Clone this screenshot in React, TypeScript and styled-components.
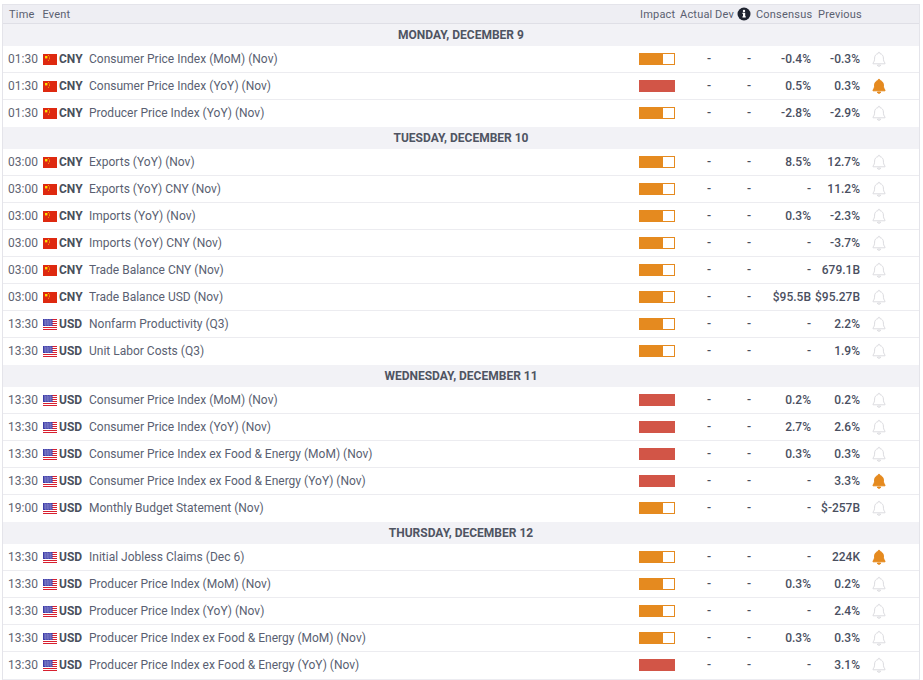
import styled, { createGlobalStyle } from "styled-components";

type Ev = {
  time: string;
  cur: "CNY" | "USD";
  name: string;
  high?: boolean;
  cons: string;
  prev: string;
  alert?: boolean;
};

const days: { title: string; rows: Ev[] }[] = [
  {
    title: "MONDAY, DECEMBER 9",
    rows: [
      { time: "01:30", cur: "CNY", name: "Consumer Price Index (MoM) (Nov)", cons: "-0.4%", prev: "-0.3%" },
      { time: "01:30", cur: "CNY", name: "Consumer Price Index (YoY) (Nov)", high: true, cons: "0.5%", prev: "0.3%", alert: true },
      { time: "01:30", cur: "CNY", name: "Producer Price Index (YoY) (Nov)", cons: "-2.8%", prev: "-2.9%" },
    ],
  },
  {
    title: "TUESDAY, DECEMBER 10",
    rows: [
      { time: "03:00", cur: "CNY", name: "Exports (YoY) (Nov)", cons: "8.5%", prev: "12.7%" },
      { time: "03:00", cur: "CNY", name: "Exports (YoY) CNY (Nov)", cons: "-", prev: "11.2%" },
      { time: "03:00", cur: "CNY", name: "Imports (YoY) (Nov)", cons: "0.3%", prev: "-2.3%" },
      { time: "03:00", cur: "CNY", name: "Imports (YoY) CNY (Nov)", cons: "-", prev: "-3.7%" },
      { time: "03:00", cur: "CNY", name: "Trade Balance CNY (Nov)", cons: "-", prev: "679.1B" },
      { time: "03:00", cur: "CNY", name: "Trade Balance USD (Nov)", cons: "$95.5B", prev: "$95.27B" },
      { time: "13:30", cur: "USD", name: "Nonfarm Productivity (Q3)", cons: "-", prev: "2.2%" },
      { time: "13:30", cur: "USD", name: "Unit Labor Costs (Q3)", cons: "-", prev: "1.9%" },
    ],
  },
  {
    title: "WEDNESDAY, DECEMBER 11",
    rows: [
      { time: "13:30", cur: "USD", name: "Consumer Price Index (MoM) (Nov)", high: true, cons: "0.2%", prev: "0.2%" },
      { time: "13:30", cur: "USD", name: "Consumer Price Index (YoY) (Nov)", high: true, cons: "2.7%", prev: "2.6%" },
      { time: "13:30", cur: "USD", name: "Consumer Price Index ex Food & Energy (MoM) (Nov)", high: true, cons: "0.3%", prev: "0.3%" },
      { time: "13:30", cur: "USD", name: "Consumer Price Index ex Food & Energy (YoY) (Nov)", high: true, cons: "-", prev: "3.3%", alert: true },
      { time: "19:00", cur: "USD", name: "Monthly Budget Statement (Nov)", cons: "-", prev: "$-257B" },
    ],
  },
  {
    title: "THURSDAY, DECEMBER 12",
    rows: [
      { time: "13:30", cur: "USD", name: "Initial Jobless Claims (Dec 6)", cons: "-", prev: "224K", alert: true },
      { time: "13:30", cur: "USD", name: "Producer Price Index (MoM) (Nov)", cons: "0.3%", prev: "0.2%" },
      { time: "13:30", cur: "USD", name: "Producer Price Index (YoY) (Nov)", cons: "-", prev: "2.4%" },
      { time: "13:30", cur: "USD", name: "Producer Price Index ex Food & Energy (MoM) (Nov)", cons: "0.3%", prev: "0.3%" },
      { time: "13:30", cur: "USD", name: "Producer Price Index ex Food & Energy (YoY) (Nov)", high: true, cons: "-", prev: "3.1%" },
    ],
  },
];

function Flag({ cur }: { cur: Ev["cur"] }) {
  if (cur === "CNY") {
    return (
      <FlagSvg viewBox="0 0 14 11">
        <rect width="14" height="11" fill="#de2910" />
        <rect x="2" y="2" width="2.400" height="2.400" fill="#ffde00" />
        <rect x="5" y="1" width="1" height="1" fill="#f5b000" />
        <rect x="6" y="2.600" width="1" height="1" fill="#f5b000" />
        <rect x="6" y="4.200" width="1" height="1" fill="#f5b000" />
        <rect x="5" y="5.800" width="1" height="1" fill="#f5b000" />
      </FlagSvg>
    );
  }
  return (
    <FlagSvg viewBox="0 0 14 11">
      <rect width="14" height="11" fill="#fff" />
      <rect y="0" width="14" height="1" fill="#d8202f" />
      <rect y="2" width="14" height="1" fill="#d8202f" />
      <rect y="4" width="14" height="1" fill="#d8202f" />
      <rect y="6" width="14" height="1" fill="#d8202f" />
      <rect y="8" width="14" height="1" fill="#d8202f" />
      <rect y="10" width="14" height="1" fill="#d8202f" />
      <rect width="9.500" height="7" fill="#3c3ba8" />
      <path d="M1 1h8M1 3h8M1 5h8M2 2h7M2 4h7M2 6h7" stroke="#e4e6f6" strokeWidth="0.6" strokeDasharray="0.8 0.8" />
    </FlagSvg>
  );
}

function Bell({ on }: { on?: boolean }) {
  return (
    <BellSvg viewBox="0 0 14 16" $on={on}>
      <path
        d="M7 1.200c-.5 0-.9.4-.9.9v.5C3.900 3 2.600 4.800 2.600 7c0 2.800-.6 3.800-1.600 5v.8h12V12c-1-1.200-1.600-2.200-1.600-5 0-2.200-1.300-4-3.500-4.400v-.5c0-.5-.4-.9-.9-.9z"
        strokeLinejoin="round"
      />
      <path d="M5.400 14a1.600 1.300 0 0 0 3.200 0z" />
    </BellSvg>
  );
}

export default function App() {
  return (
    <>
      <GlobalStyle />
      <Table>
        <HeadRow>
          <HeadLeft>
            <span>Time</span>
            <span>Event</span>
          </HeadLeft>
          <HeadCell $w={40}>Impact</HeadCell>
          <HeadCell $w={35}>Actual</HeadCell>
          <HeadCell $w={22}>Dev</HeadCell>
          <InfoDot>
            <svg viewBox="0 0 14 14" width="14" height="14">
              <circle cx="7" cy="7" r="6.500" fill="#1f2430" />
              <rect x="6" y="5.800" width="2.200" height="4.400" fill="#fff" />
              <rect x="5.300" y="5.800" width="2" height="1" fill="#fff" />
              <rect x="5.300" y="9.400" width="3.600" height="1" fill="#fff" />
              <circle cx="7" cy="3.900" r="1.200" fill="#fff" />
            </svg>
          </InfoDot>
          <HeadCell $w={62}>Consensus</HeadCell>
          <HeadCell $w={58}>Previous</HeadCell>
        </HeadRow>
        {days.map((d) => (
          <section key={d.title}>
            <DayRow>{d.title}</DayRow>
            {d.rows.map((r) => (
              <Row key={r.time + r.name}>
                <Time>{r.time}</Time>
                <Flag cur={r.cur} />
                <Currency>{r.cur}</Currency>
                <EventName>{r.name}</EventName>
                <Impact $high={r.high} />
                <Dash $w={36}>-</Dash>
                <Dash $w={40}>-</Dash>
                <Value $w={60}>{r.cons}</Value>
                <Value $w={49}>{r.prev}</Value>
                <Bell on={r.alert} />
              </Row>
            ))}
          </section>
        ))}
      </Table>
    </>
  );
}

const GlobalStyle = createGlobalStyle`
  html, body {
    margin: 0;
    padding: 0;
    background: #fff;
  }
  body {
    font-family: Roboto, "Liberation Sans", sans-serif;
    font-size: 12px;
    color: #4a4f5f;
  }
`;

const Table = styled.div`
  margin: 4px 0 0 2px;
  width: 918px;
  box-sizing: border-box;
  border: 1px solid #e4e4ea;
  border-bottom: 2px solid #ececf1;
`;

const HeadRow = styled.div`
  display: flex;
  align-items: center;
  height: 18px;
  background: #eeeef3;
  border-bottom: 1px solid #dfdfe6;
  color: #5a6070;
  font-size: 11px;
  letter-spacing: 0.2px;
`;

const HeadLeft = styled.div`
  display: flex;
  gap: 8px;
  flex: 0 0 637px;
  padding-left: 6px;
  box-sizing: border-box;
`;

const HeadCell = styled.div<{ $w: number }>`
  flex: 0 0 ${(p) => p.$w}px;
  white-space: nowrap;
`;

const InfoDot = styled.div`
  display: flex;
  flex: 0 0 19px;
`;

const DayRow = styled.div`
  height: 22px;
  line-height: 22px;
  background: #f2f2f6;
  text-align: center;
  font-weight: 700;
  color: #4f5462;
`;

const Row = styled.div`
  display: flex;
  align-items: center;
  height: 27px;
  box-sizing: border-box;
  padding-left: 5px;
  border-bottom: 1px solid #ececf0;
  &:last-child {
    border-bottom-color: transparent;
  }
`;

const Time = styled.span`
  flex: 0 0 35px;
  color: #5f6472;
`;

const FlagSvg = styled.svg`
  flex: 0 0 auto;
  width: 14px;
  height: 11px;
`;

const Currency = styled.span`
  flex: 0 0 30px;
  margin-left: 2px;
  font-weight: 700;
  color: #4a4f5c;
`;

const EventName = styled.span`
  flex: 0 0 550px;
  color: #5a5f72;
`;

const Impact = styled.div<{ $high?: boolean }>`
  flex: 0 0 36px;
  height: 12px;
  box-sizing: border-box;
  border: 1px solid ${(p) => (p.$high ? "#d25547" : "#e58a1f")};
  background: ${(p) =>
    p.$high
      ? "#d25547"
      : "linear-gradient(to right, #e58a1f 0, #e58a1f 23px, #fff 23px)"};
`;

const Dash = styled.span<{ $w: number }>`
  flex: 0 0 ${(p) => p.$w}px;
  text-align: right;
  font-weight: 500;
`;

const Value = styled.span<{ $w: number }>`
  flex: 0 0 ${(p) => p.$w}px;
  text-align: right;
  font-weight: 500;
  white-space: nowrap;
  color: #4a4f5f;
`;

const BellSvg = styled.svg<{ $on?: boolean }>`
  width: 14px;
  height: 16px;
  margin-left: 12px;
  fill: ${(p) => (p.$on ? "#e58a1f" : "#fff")};
  stroke: ${(p) => (p.$on ? "#e58a1f" : "#dcdce0")};
  stroke-width: 1;
`;
